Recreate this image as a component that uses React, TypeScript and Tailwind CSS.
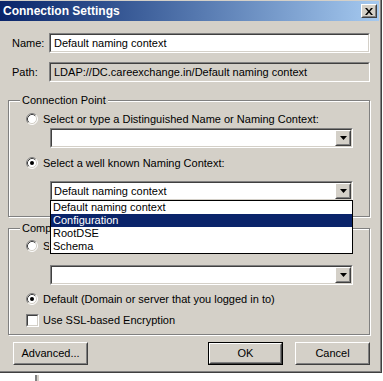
import type { ReactNode } from "react";

const NAMING_CONTEXTS = ["Default naming context", "Configuration", "RootDSE", "Schema"];

function Sunken({ children, className = "", gray = false }: { children?: ReactNode; className?: string; gray?: boolean }) {
  return (
    <div className={`border border-t-[#808080] border-l-[#808080] border-b-white border-r-white ${className}`}>
      <div
        className={`flex h-full items-center border border-t-[#404040] border-l-[#404040] border-b-[#d4d0c8] border-r-[#d4d0c8] ${
          gray ? "bg-[#d4d0c8]" : "bg-white"
        }`}
      >
        {children}
      </div>
    </div>
  );
}

function Raised({ children, className = "" }: { children?: ReactNode; className?: string }) {
  return (
    <div className={`border border-t-white border-l-white border-b-[#404040] border-r-[#404040] bg-[#d4d0c8] ${className}`}>
      <div className="flex h-full items-center justify-center border border-t-[#d4d0c8] border-l-[#d4d0c8] border-b-[#808080] border-r-[#808080]">
        {children}
      </div>
    </div>
  );
}

function Combo({ value = "" }: { value?: string }) {
  return (
    <Sunken className="ml-[41px] h-[20px] w-[303px]">
      <span className="flex-1 pl-[2px] leading-none">{value}</span>
      <Raised className="h-[16px] w-[16px]">
        <svg width="7" height="4" viewBox="0 0 7 4">
          <path d="M0 0h7L3.5 4z" fill="#000" />
        </svg>
      </Raised>
    </Sunken>
  );
}

function Radio({ checked = false, label, clip = false }: { checked?: boolean; label: string; clip?: boolean }) {
  return (
    <div className="flex h-[14px] items-center pl-[17px]">
      <svg width="12" height="12" viewBox="0 0 12 12" className="shrink-0">
        <circle cx="6" cy="6" r="5" fill="#fff" />
        <path d="M2.11 9.89A5.5 5.5 0 0 1 9.89 2.11" fill="none" stroke="#808080" />
        <path d="M9.89 2.11A5.5 5.5 0 0 1 2.11 9.89" fill="none" stroke="#fff" />
        <path d="M2.82 9.18A4.5 4.5 0 0 1 9.18 2.82" fill="none" stroke="#404040" />
        <path d="M9.18 2.82A4.5 4.5 0 0 1 2.82 9.18" fill="none" stroke="#d4d0c8" />
        {checked && <circle cx="6" cy="6" r="2" fill="#000" />}
      </svg>
      {/* clipped where the open list lies over it */}
      <span className={`ml-[5px] whitespace-nowrap ${clip ? "w-[6px] overflow-hidden" : ""}`}>{label}</span>
    </div>
  );
}

function Group({
  title,
  children,
  className = "",
  clip = false,
}: {
  title: string;
  children: ReactNode;
  className?: string;
  clip?: boolean;
}) {
  return (
    <div
      className={`relative ml-[8px] w-[362px] border border-[#808080] shadow-[inset_1px_1px_0_#fff,1px_1px_0_#fff] ${className}`}
    >
      <span
        className={`absolute -top-[8px] left-[11px] whitespace-nowrap bg-[#d4d0c8] px-[2px] leading-[14px] ${
          clip ? "w-[30px] overflow-hidden" : ""
        }`}
      >
        {title}
      </span>
      {children}
    </div>
  );
}

export default function App() {
  return (
    <div className="relative h-[381px] w-[383px] overflow-hidden bg-white font-['Liberation_Sans',Arial,sans-serif] text-[11px] text-black">
      <div className="flex h-[373px] w-[382px] flex-col border-r border-b border-[#404040] bg-[#d4d0c8] pt-[1px] shadow-[inset_-1px_-1px_0_#808080]">
        {/* title bar */}
        <div className="mr-[2px] flex h-[20px] items-center bg-linear-to-r from-[#0a246a] to-[#a6caf0] pl-[3px] pr-[2px]">
          <span className="flex-1 text-[12px] font-bold text-white">Connection Settings</span>
          <Raised className="h-[14px] w-[16px]">
            <svg width="8" height="7" viewBox="0 0 8 7">
              <path d="M0 0h2l2 2.5L6 0h2L5 3.5 8 7H6L4 4.5 2 7H0l3-3.5z" fill="#000" />
            </svg>
          </Raised>
        </div>

        <div className="mt-[12px] flex items-center pl-[12px]">
          <span className="w-[37px]">Name:</span>
          <Sunken className="h-[20px] w-[321px]">
            <span className="pl-[3px]">Default naming context</span>
          </Sunken>
        </div>
        <div className="mt-[9px] flex items-center pl-[12px]">
          <span className="w-[37px]">Path:</span>
          <Sunken gray className="h-[20px] w-[321px]">
            <span className="pl-[3px]">LDAP://DC.careexchange.in/Default naming context</span>
          </Sunken>
        </div>

        <Group title="Connection Point" className="mt-[18px] h-[117px] pt-[11px]">
          <Radio label="Select or type a Distinguished Name or Naming Context:" />
          <div className="mt-[2px]">
            <Combo />
          </div>
          <div className="mt-[8px]">
            <Radio checked label="Select a well known Naming Context:" />
          </div>
          <div className="mt-[11px]">
            <Combo value="Default naming context" />
          </div>
        </Group>

        <Group title="Computer" clip className="mt-[11px] h-[107px] pt-[10px]">
          <Radio clip label="Select or type a domain or server: (Server | Domain [:port])" />
          <div className="mt-[12px]">
            <Combo />
          </div>
          <div className="mt-[7px]">
            <Radio checked label="Default (Domain or server that you logged in to)" />
          </div>
          <div className="mt-[7px] flex h-[14px] items-center pl-[17px]">
            <Sunken className="h-[13px] w-[13px]" />
            <span className="ml-[4px]">Use SSL-based Encryption</span>
          </div>
        </Group>

        <div className="mt-[7px] flex w-[370px] pl-[13px]">
          <Raised className="h-[23px] w-[75px]">Advanced...</Raised>
          <div className="flex-1" />
          <div className="border border-black">
            <Raised className="h-[21px] w-[73px]">OK</Raised>
          </div>
          <Raised className="ml-[12px] h-[23px] w-[75px]">Cancel</Raised>
        </div>
      </div>

      {/* window behind the dialog, peeking out below it */}
      <div className="ml-[35px] mt-[2px] h-[8px] w-[4px] border-l-2 border-[#808080] bg-[#d4d0c8]" />

      {/* open drop-down list of the naming-context combo */}
      <div className="absolute left-[50px] top-[200px] w-[303px] border border-black bg-white">
        {NAMING_CONTEXTS.map((item) => (
          <div
            key={item}
            className={`h-[13px] pl-[2px] leading-[13px] ${item === "Configuration" ? "bg-[#0a246a] text-white" : ""}`}
          >
            {item}
          </div>
        ))}
      </div>
    </div>
  );
}
